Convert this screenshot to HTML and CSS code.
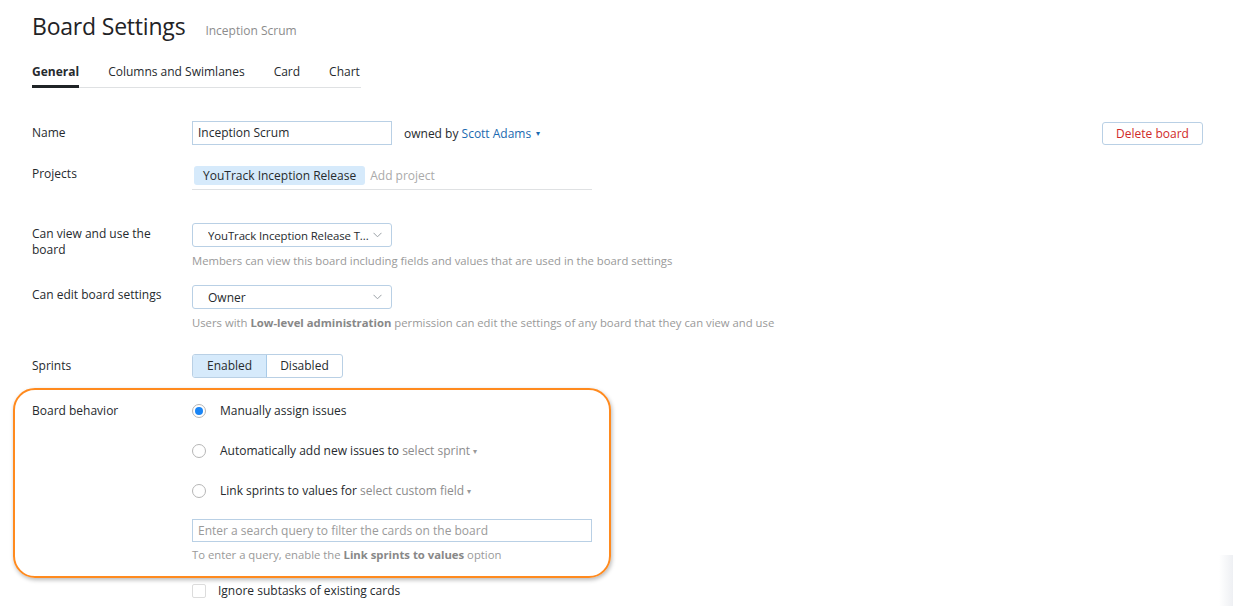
FILE: index.html
```html
<!DOCTYPE html>
<html>
<head>
<meta charset="utf-8">
<link rel="stylesheet" href="styles.css">
</head>
<body>
<div class="page">
  <header class="head">
    <h1 class="title">Board Settings</h1>
    <span class="subtitle">Inception Scrum</span>
  </header>
  <nav class="tabs">
    <span class="tab active">General</span>
    <span class="tab">Columns and Swimlanes</span>
    <span class="tab">Card</span>
    <span class="tab">Chart</span>
  </nav>

  <div class="row row-name">
    <div class="label">Name</div>
    <div class="ctrl inline">
      <div class="input">Inception Scrum</div>
      <span class="owner">owned by <span class="link">Scott Adams</span> <span class="caret dark">▾</span></span>
      <span class="spacer"></span>
      <button class="btn-delete">Delete board</button>
    </div>
  </div>

  <div class="row row-projects">
    <div class="label">Projects</div>
    <div class="ctrl">
      <div class="tagbox"><span class="tag">YouTrack Inception Release</span><span class="placeholder">Add project</span></div>
    </div>
  </div>

  <div class="row row-view">
    <div class="label">Can view and use the board</div>
    <div class="ctrl">
      <div class="select"><span class="sel-text small">YouTrack Inception Release T...</span><svg class="chev" width="9" height="6" viewBox="0 0 9 6"><path d="M0.5 0.8 L4.5 4.8 L8.5 0.8" fill="none" stroke="#9aa0a6" stroke-width="1"/></svg></div>
      <div class="help">Members can view this board including fields and values that are used in the board settings</div>
    </div>
  </div>

  <div class="row row-edit">
    <div class="label">Can edit board settings</div>
    <div class="ctrl">
      <div class="select"><span class="sel-text">Owner</span><svg class="chev" width="9" height="6" viewBox="0 0 9 6"><path d="M0.5 0.8 L4.5 4.8 L8.5 0.8" fill="none" stroke="#9aa0a6" stroke-width="1"/></svg></div>
      <div class="help">Users with <b>Low-level administration</b> permission can edit the settings of any board that they can view and use</div>
    </div>
  </div>

  <div class="row row-sprints">
    <div class="label">Sprints</div>
    <div class="ctrl">
      <div class="btngroup"><span class="seg on">Enabled</span><span class="seg">Disabled</span></div>
    </div>
  </div>

  <div class="highlight">
    <div class="row row-behavior">
      <div class="label">Board behavior</div>
      <div class="ctrl">
        <label class="option"><span class="radio checked"></span>Manually assign issues</label>
        <label class="option"><span class="radio"></span>Automatically add new issues to <span class="muted">select sprint</span> <span class="caret">▾</span></label>
        <label class="option"><span class="radio"></span>Link sprints to values for <span class="muted">select custom field</span> <span class="caret">▾</span></label>
        <div class="input wide placeholder-text">Enter a search query to filter the cards on the board</div>
        <div class="help">To enter a query, enable the <b>Link sprints to values</b> option</div>
      </div>
    </div>
  </div>

  <div class="row row-subtasks">
    <div class="label"></div>
    <div class="ctrl">
      <label class="option check"><span class="checkbox"></span>Ignore subtasks of existing cards</label>
    </div>
  </div>
</div>
<div class="edge-shadow"></div>
</body>
</html>
```
FILE: styles.css
```css
html, body {
  margin: 0;
  padding: 0;
  background: #fff;
  overflow: hidden;
}
body {
  font-family: "Open Sans", "Noto Sans", sans-serif;
  font-size: 12px;
  color: #262a2e;
  height: 606px;
  position: relative;
}
.page {
  padding: 10px 30px 0 32px;
}
.head {
  display: flex;
  align-items: baseline;
  gap: 20px;
}
.title {
  margin: 0;
  font-weight: 400;
  font-size: 23px;
  line-height: 32px;
  color: #1f2326;
  letter-spacing: -0.2px;
}
.subtitle {
  color: #8c8c8c;
  font-size: 12px;
}
.tabs {
  display: flex;
  gap: 29px;
  width: 329px;
  margin-top: 20px;
  border-bottom: 1px solid #dfe1e3;
  height: 26px;
  box-sizing: border-box;
}
.tab {
  color: #262a2e;
  line-height: 16px;
  padding-top: 2px;
  height: 23px;
  box-sizing: border-box;
}
.tab.active {
  font-weight: 700;
  border-bottom: 3px solid #1f2326;
  height: 26px;
  box-sizing: border-box;
  margin-bottom: -1px;
}
.row {
  display: flex;
}
.label {
  width: 160px;
  flex: none;
  color: #262a2e;
  line-height: 16px;
  padding-right: 20px;
  box-sizing: border-box;
}
.ctrl {
  flex: 1;
}
.inline {
  display: flex;
  align-items: center;
}
.spacer { flex: 1; }

.row-name { margin-top: 33px; align-items: center; }
.input {
  width: 200px;
  height: 24px;
  box-sizing: border-box;
  border: 1px solid #b9d0e5;
  padding: 0 5px;
  line-height: 22px;
  color: #262a2e;
}
.input.wide { width: 400px; }
.placeholder-text { color: #9a9a9a; }
.owner {
  margin-left: 12px;
  color: #262a2e;
}
.link { color: #1b6ab0; }
.caret {
  font-size: 8px;
  color: #999;
  vertical-align: 2px;
}
.caret.dark { color: #1b6ab0; margin-left: 2px; }
.btn-delete {
  font-family: inherit;
  font-size: 12px;
  color: #d02a2a;
  background: #fff;
  border: 1px solid #b9d0e5;
  border-radius: 3px;
  height: 23px;
  width: 101px;
  padding: 0;
}

.row-projects { margin-top: 21px; }
.tagbox {
  width: 400px;
  height: 23px;
  border-bottom: 1px solid #dfe1e3;
  display: flex;
  align-items: flex-start;
}
.tag {
  background: #d6eafb;
  border-radius: 3px;
  margin-left: 2px;
  padding: 0 9px;
  line-height: 19px;
  height: 19px;
  color: #262a2e;
}
.placeholder {
  color: #aaa;
  margin-left: 5px;
  line-height: 19px;
}

.row-view { margin-top: 33px; }
.row-view .label { padding-top: 3px; }
.select {
  width: 200px;
  height: 24px;
  box-sizing: border-box;
  border: 1px solid #b9d0e5;
  border-radius: 3px;
  display: flex;
  align-items: center;
  padding: 0 9px 0 15px;
}
.sel-text { flex: 1; white-space: nowrap; overflow: hidden; }
.sel-text.small { font-size: 11.4px; letter-spacing: -0.1px; }
.chev { flex: none; margin-left: 3px; }
.help {
  color: #999;
  font-size: 11.3px;
  line-height: 16px;
  margin-top: 6px;
}
.help b { color: #888; }

.row-edit { margin-top: 16px; }
.row-edit .label { padding-top: 2px; }

.row-sprints { margin-top: 23px; }
.row-sprints .label { padding-top: 4px; }
.btngroup {
  display: inline-flex;
  border: 1px solid #b9d0e5;
  border-radius: 3px;
  height: 24px;
  box-sizing: border-box;
  overflow: hidden;
}
.seg {
  line-height: 22px;
  padding: 0 13px;
  color: #262a2e;
}
.seg.on {
  background: #d6eafb;
  border-right: 1px solid #a9cbe8;
  padding: 0 14px;
}

.highlight {
  margin-top: 10px;
  margin-left: -19px;
  width: 598px;
  box-sizing: border-box;
  border: 2px solid #ff8a1e;
  border-radius: 22px;
  box-shadow: 1px 2px 4px rgba(0,0,0,0.28);
  padding: 11px 0 13px 17px;
}
.row-behavior .label { line-height: 20px; }
.option {
  display: flex;
  align-items: center;
  height: 20px;
  line-height: 20px;
  color: #262a2e;
  margin-bottom: 20px;
  white-space: pre;
}
.option .muted { color: #8c8c8c; }
.option .caret { margin-left: 3px; }
.radio {
  width: 14px;
  height: 14px;
  box-sizing: border-box;
  border: 1px solid #b6b6b6;
  border-radius: 50%;
  margin-right: 14px;
  flex: none;
  position: relative;
}
.radio.checked::after {
  content: "";
  position: absolute;
  left: 2px;
  top: 2px;
  width: 8px;
  height: 8px;
  border-radius: 50%;
  background: #1a85f5;
}
.row-behavior .input.wide { margin-top: -2px; height: 23px; }
.row-behavior .help { margin-top: 5px; line-height: 16px; }

.row-subtasks { margin-top: 3px; }
.check { margin-bottom: 0; }
.checkbox {
  width: 14px;
  height: 14px;
  box-sizing: border-box;
  border: 1px solid #dcdcdc;
  border-radius: 2px;
  margin-right: 12px;
  flex: none;
}
.edge-shadow {
  position: absolute;
  right: 0;
  top: 555px;
  width: 14px;
  height: 51px;
  background: linear-gradient(to right, rgba(240,242,245,0), rgba(236,238,242,0.9));
}
```
